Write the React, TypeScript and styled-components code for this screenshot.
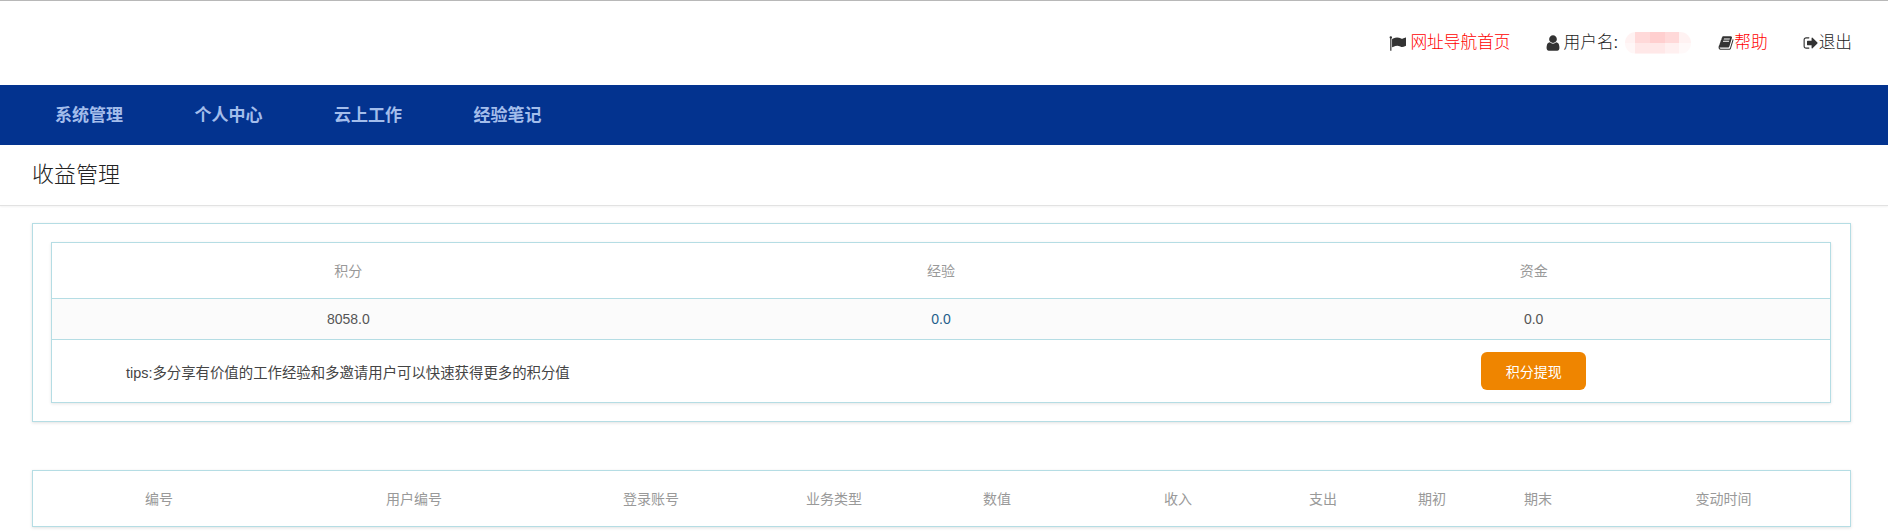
import React from "react";
import styled, { createGlobalStyle } from "styled-components";

const Global = createGlobalStyle`
  html, body { margin: 0; padding: 0; background: #fff; }
  body { font-family: "Liberation Sans", "Noto Sans CJK SC", sans-serif; color: #333; font-size: 14px; }
`;

const Page = styled.div`
  border-top: 1px solid #b8b8b8;
  height: 531px;
  overflow: hidden;
`;
const TopBar = styled.header`
  height: 84px;
  display: flex;
  align-items: center;
  justify-content: flex-end;
  padding: 0 36px 0 0;
  box-sizing: border-box;
`;
const TopLink = styled.a<{ $gap: number; $red?: boolean }>`
  display: flex;
  align-items: center;
  margin-left: ${(p) => p.$gap}px;
  font-size: 16.7px;
  font-weight: 300;
  line-height: 22px;
  white-space: nowrap;
  color: ${(p) => (p.$red ? "#ff0000" : "#222")};
`;
const Icon = styled.svg<{ $size: number; $gap?: number }>`
  width: ${(p) => p.$size}px;
  height: ${(p) => p.$size}px;
  fill: #333;
  margin-right: ${(p) => p.$gap ?? 0}px;
  flex: none;
`;
const Redacted = styled.span`
  display: inline-block;
  width: 66px;
  height: 22px;
  margin-left: 7px;
  border-radius: 11px;
  background:
    linear-gradient(90deg, #fff2f2 0 15%, #ffd9d9 15% 38%, #ffcfcf 38% 60%, #ffd9d9 60% 82%, #fff2f2 82% 100%) top / 100% 52% no-repeat,
    linear-gradient(90deg, #fff7f7 0 15%, #ffe8e8 15% 60%, #fff0f0 60% 82%, #fff9f9 82% 100%) bottom / 100% 48% no-repeat;
`;
const Nav = styled.nav`
  height: 60px;
  box-sizing: border-box;
  padding: 0 0 4px 55px;
  background: #03338f;
  display: flex;
  align-items: center;
  gap: 71.5px;
`;
const NavItem = styled.a`
  font-size: 17px;
  font-weight: 700;
  color: #a3bdeb;
`;
const TitleBar = styled.div`
  height: 61px;
  display: flex;
  align-items: center;
  padding: 0 0 6px 32px;
  box-sizing: border-box;
  border-bottom: 1px solid #e2e2e2;
  box-shadow: 0 1px 2px rgba(0, 0, 0, 0.05);
  font-size: 22px;
  font-weight: 300;
  color: #222;
`;
const Content = styled.main`
  padding: 17px 37px 0 32px;
`;
const Panel = styled.section`
  border: 1px solid #b5dde4;
  box-shadow: 0 1px 3px rgba(0, 0, 0, 0.12);
  padding: 18px 19px 18px 18px;
`;
const SummaryTable = styled.div`
  border: 1px solid #b5dde4;
  box-shadow: 0 1px 3px rgba(0, 0, 0, 0.1);
`;
const Row3 = styled.div<{ $h: number; $bg?: string; $line?: boolean; $pad?: number }>`
  display: grid;
  grid-template-columns: repeat(3, 1fr);
  height: ${(p) => p.$h}px;
  box-sizing: ${(p) => (p.$pad ? "border-box" : "content-box")};
  padding-bottom: ${(p) => p.$pad ?? 0}px;
  align-items: center;
  text-align: center;
  background: ${(p) => p.$bg ?? "#fff"};
  border-top: ${(p) => (p.$line ? "1px solid #b5dde4" : "none")};
`;
const Head = styled.div`
  color: #999;
  font-size: 14px;
`;
const Value = styled.div<{ $blue?: boolean }>`
  color: ${(p) => (p.$blue ? "#1f5f8b" : "#555")};
  font-size: 14px;
`;
const Tips = styled.div`
  grid-column: span 2;
  text-align: left;
  padding-left: 74px;
  color: #444;
  font-size: 14.4px;
`;
const Action = styled.div`
  display: flex;
  justify-content: center;
`;
const OrangeButton = styled.button`
  width: 105px;
  height: 38px;
  background: #ef8500;
  border: none;
  border-radius: 6px;
  color: #fff;
  font: 14px "Liberation Sans", "Noto Sans CJK SC", sans-serif;
`;
const ListPanel = styled.section`
  margin-top: 48px;
  border: 1px solid #b5dde4;
  box-shadow: 0 1px 3px rgba(0, 0, 0, 0.12);
  height: 57px;
  padding-bottom: 2px;
  box-sizing: border-box;
  display: grid;
  grid-template-columns: 252px 258px 216px 150px 176px 186px 104px 114px 98px 1fr;
  align-items: center;
  text-align: center;
  & > div:last-child { padding-left: 10px; }
`;

const FLAG = "M320 256q0 72-64 110v1266q0 13-9.5 22.5t-22.5 9.5h-64q-13 0-22.5-9.5t-9.5-22.5v-1266q-64-38-64-110 0-53 37.5-90.5t90.5-37.5 90.5 37.5 37.5 90.5zm1472 64v763q0 25-12.5 38.5t-39.5 27.5q-215 116-369 116-61 0-123.5-22t-108.5-48-115.5-48-142.5-22q-192 0-464 146-17 9-33 9-26 0-45-19t-19-45v-742q0-32 31-55 21-14 79-43 236-120 421-120 107 0 200 29t219 88q38 19 88 19 54 0 117.5-21t110-47 88-47 54.5-21q26 0 45 19t19 45z";
const USER = "M1536 1399q0 109-62.5 187t-150.5 78h-854q-88 0-150.5-78t-62.5-187q0-85 8.5-160.5t31.5-152 58.5-131 94-89 134.5-34.5q131 128 313 128t313-128q76 0 134.5 34.5t94 89 58.5 131 31.5 152 8.5 160.5zm-256-887q0 159-112.5 271.5t-271.5 112.5-271.5-112.5-112.5-271.5 112.5-271.5 271.5-112.5 271.5 112.5 112.5 271.5z";
const BOOK = "M1703 478q40 57 18 129l-275 906q-19 64-76.5 107.5t-122.5 43.5h-923q-77 0-148.5-53.5t-99.5-131.5q-24-67-2-127 0-4 3-27t4-37q1-8-3-21.5t-3-19.5q2-11 8-21t16.5-23.5 16.5-23.5q23-38 45-91.5t30-91.5q3-10 .5-30t-.5-28q3-11 17-28t17-23q21-36 42-92t25-90q1-9-2.5-32t.5-28q4-13 22-30.5t22-22.5q19-26 42.5-84.5t27.5-96.5q1-8-3-25.5t-2-26.5q2-8 9-18t18-23 17-21q8-12 16.5-30.5t15-35 16-36 19.5-32 26.5-23.5 36-11.5 47.5 5.5l-1 3q38-9 51-9h761q74 0 114 56t18 130l-274 906q-36 119-71.5 153.5t-128.5 34.5h-869q-27 0-38 15-11 16-1 43 24 70 144 70h923q29 0 56-15.5t35-41.5l300-987q7-22 5-57 38 15 59 43zm-1064 2q-4 13 2 22.5t20 9.5h608q13 0 25.5-9.5t16.5-22.5l21-64q4-13-2-22.5t-20-9.5h-608q-13 0-25.5 9.5t-16.5 22.5zm-83 256q-4 13 2 22.5t20 9.5h608q13 0 25.5-9.5t16.5-22.5l21-64q4-13-2-22.5t-20-9.5h-608q-13 0-25.5 9.5t-16.5 22.5z";
const SIGNOUT = "M704 1440q0 4 1 20t.5 26.5-3 23.5-10 19.5-20.5 6.5h-320q-119 0-203.5-84.5t-84.5-203.5v-704q0-119 84.5-203.5t203.5-84.5h320q13 0 22.5 9.5t9.5 22.5q0 4 1 20t.5 26.5-3 23.5-10 19.5-20.5 6.5h-320q-66 0-113 47t-47 113v704q0 66 47 113t113 47h288 11 13t11.5 1 11.5 3 8 5.5 7 9 2 13.5zm928-544q0 26-19 45l-544 544q-19 19-45 19t-45-19-19-45v-288h-448q-26 0-45-19t-19-45v-384q0-26 19-45t45-19h448v-288q0-26 19-45t45-19 45 19l544 544q19 19 19 45z";

const Fa = ({ d, size, gap }: { d: string; size: number; gap?: number }) => (
  <Icon viewBox="0 0 1792 1792" $size={size} $gap={gap}><path d={d} /></Icon>
);

const navItems = ["系统管理", "个人中心", "云上工作", "经验笔记"];
const columns = ["编号", "用户编号", "登录账号", "业务类型", "数值", "收入", "支出", "期初", "期末", "变动时间"];

export default function App() {
  return (
    <Page>
      <Global />
      <TopBar>
        <TopLink $gap={0} $red><Fa d={FLAG} size={17} gap={4} />网址导航首页</TopLink>
        <TopLink $gap={33}><Fa d={USER} size={18} gap={2} />用户名:<Redacted /></TopLink>
        <TopLink $gap={27} $red><Fa d={BOOK} size={16} />帮助</TopLink>
        <TopLink $gap={35}><Fa d={SIGNOUT} size={16} />退出</TopLink>
      </TopBar>
      <Nav>{navItems.map((n) => <NavItem key={n}>{n}</NavItem>)}</Nav>
      <TitleBar>收益管理</TitleBar>
      <Content>
        <Panel>
          <SummaryTable>
            <Row3 $h={55} $pad={2}><Head>积分</Head><Head>经验</Head><Head>资金</Head></Row3>
            <Row3 $h={40} $bg="#fbfbfb" $line><Value>8058.0</Value><Value $blue>0.0</Value><Value>0.0</Value></Row3>
            <Row3 $h={62} $line>
              <Tips>tips:多分享有价值的工作经验和多邀请用户可以快速获得更多的积分值</Tips>
              <Action><OrangeButton>积分提现</OrangeButton></Action>
            </Row3>
          </SummaryTable>
        </Panel>
        <ListPanel>{columns.map((c) => <Head key={c}>{c}</Head>)}</ListPanel>
      </Content>
    </Page>
  );
}
